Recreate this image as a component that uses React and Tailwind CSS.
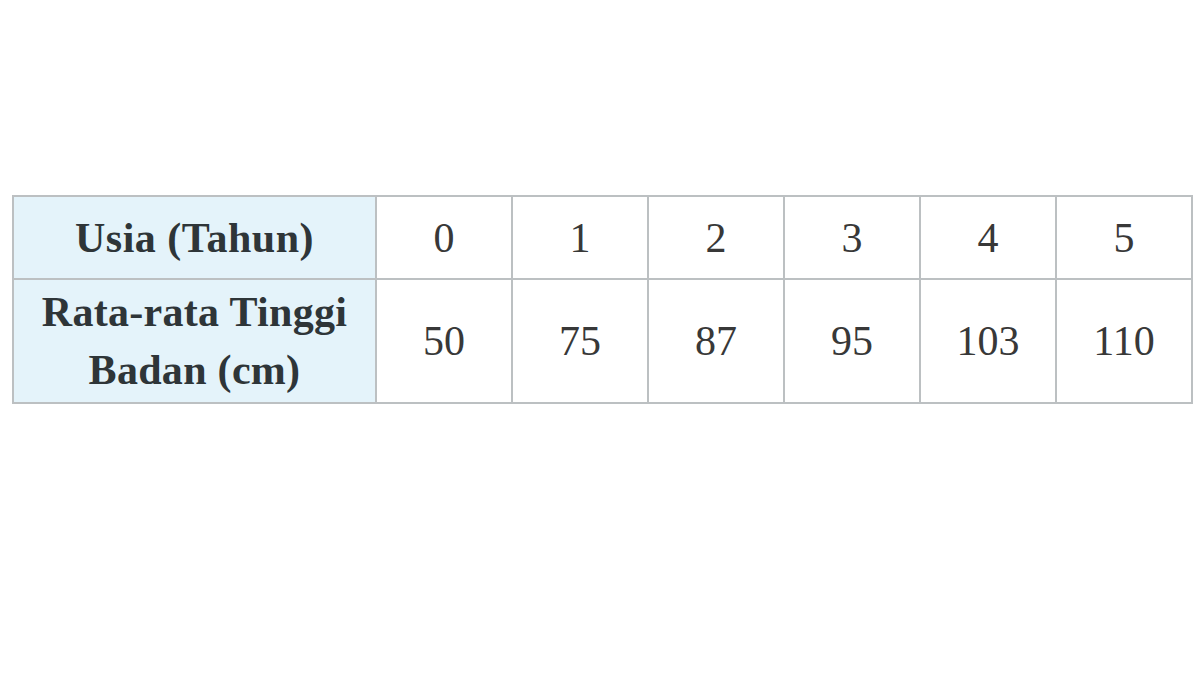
import React from "react";

const ages = ["0", "1", "2", "3", "4", "5"];
const heights = ["50", "75", "87", "95", "103", "110"];

export default function App() {
  return (
    <div className="w-[1200px] h-[675px] bg-white pt-[195px] pl-[12px]">
      <table
        className="border-collapse table-fixed w-[1181px] text-[#383838]"
        style={{ fontFamily: '"Liberation Serif", "Times New Roman", serif' }}
      >
        <colgroup>
          <col className="w-[363px]" />
          {ages.map((a) => (
            <col key={a} className="w-[136px]" />
          ))}
        </colgroup>
        <tbody>
          <tr className="h-[83px]">
            <th className="border-2 border-[#bcc0c2] bg-[#e4f3fa] text-[42px] font-bold text-[#2e3538] tracking-[0.5px] leading-none">
              Usia (Tahun)
            </th>
            {ages.map((a) => (
              <td key={a} className="border-2 border-[#bcc0c2] text-center text-[42px] leading-none">
                {a}
              </td>
            ))}
          </tr>
          <tr className="h-[124px]">
            <th className="border-2 border-[#bcc0c2] bg-[#e4f3fa] text-[42px] font-bold text-[#2e3538] tracking-[0.3px] leading-[58px]">
              Rata-rata Tinggi
              <br />
              Badan (cm)
            </th>
            {heights.map((h) => (
              <td key={h} className="border-2 border-[#bcc0c2] text-center text-[42px] leading-none">
                {h}
              </td>
            ))}
          </tr>
        </tbody>
      </table>
    </div>
  );
}
